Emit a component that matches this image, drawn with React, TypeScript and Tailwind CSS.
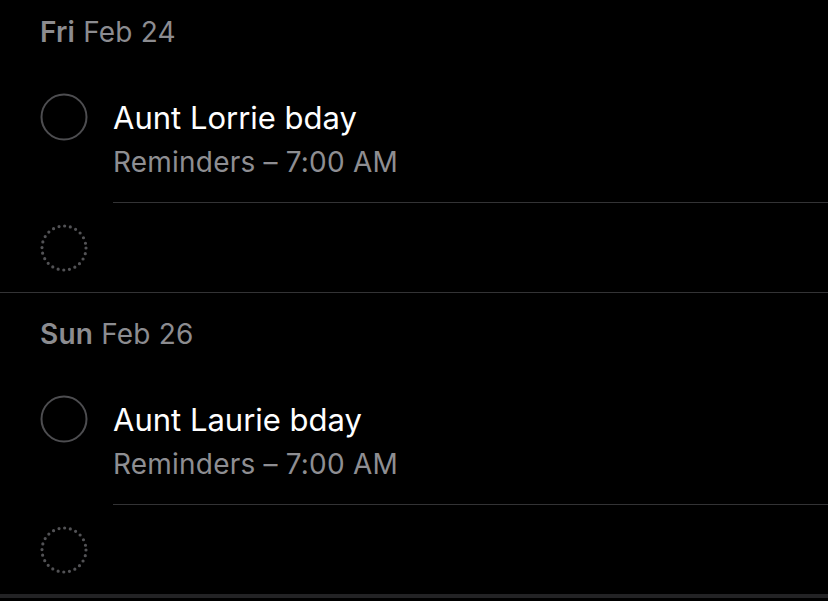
const font = { fontFamily: 'Inter, "Noto Sans", sans-serif' }

type Item = { title: string; list: string; time: string }
type Day = { weekday: string; date: string; items: Item[] }

const days: Day[] = [
  { weekday: 'Fri', date: 'Feb 24', items: [{ title: 'Aunt Lorrie bday', list: 'Reminders', time: '7:00 AM' }] },
  { weekday: 'Sun', date: 'Feb 26', items: [{ title: 'Aunt Laurie bday', list: 'Reminders', time: '7:00 AM' }] },
]

function Ring () {
  return (
    <svg width="48" height="48" viewBox="0 0 48 48" className="shrink-0">
      <circle cx="24" cy="24" r="22.5" fill="none" stroke="#4d4d50" strokeWidth="2" />
    </svg>
  )
}

function DottedRing () {
  return (
    <svg width="48" height="48" viewBox="0 0 48 48" className="shrink-0">
      <circle cx="24" cy="24" r="22" fill="none" stroke="#525255" strokeWidth="3.2"
              strokeLinecap="round" strokeDasharray="0 5.7596" />
    </svg>
  )
}

export default function App () {
  return (
    <div className="w-[828px] h-[601px] bg-black overflow-hidden flex flex-col" style={font}>
      {days.map((day, i) => (
        <section key={day.date} className={i === 0 ? 'pl-10 border-b border-[#333335]' : 'pl-10'}>
          <div className={i === 0 ? 'pt-[16px] pb-[27px]' : 'pt-[25px] pb-[27px]'}>
            <h2 className="text-[28px] leading-[32px] text-[#8c8c90] tracking-[0.2px]">
              <span className="font-semibold">{day.weekday}</span> {day.date}
            </h2>
          </div>

          {day.items.map(item => (
            <div key={item.title} className="flex items-start">
              <div className="w-[73px] pt-[18px]">
                <Ring />
              </div>
              <div className="flex-1 pt-[25px] pb-[23px] border-b border-[#333335]">
                <p className="text-[31px] leading-[36px] text-white">{item.title}</p>
                <p className="mt-[9px] text-[28px] leading-[34px] text-[#8e8e92] tracking-[0.2px]">
                  {item.list} – {item.time}
                </p>
              </div>
            </div>
          ))}

          <div className="h-[89px] flex items-center">
            <DottedRing />
          </div>
        </section>
      ))}
      <div className="h-[4px] bg-[#232325]" />
    </div>
  )
}
